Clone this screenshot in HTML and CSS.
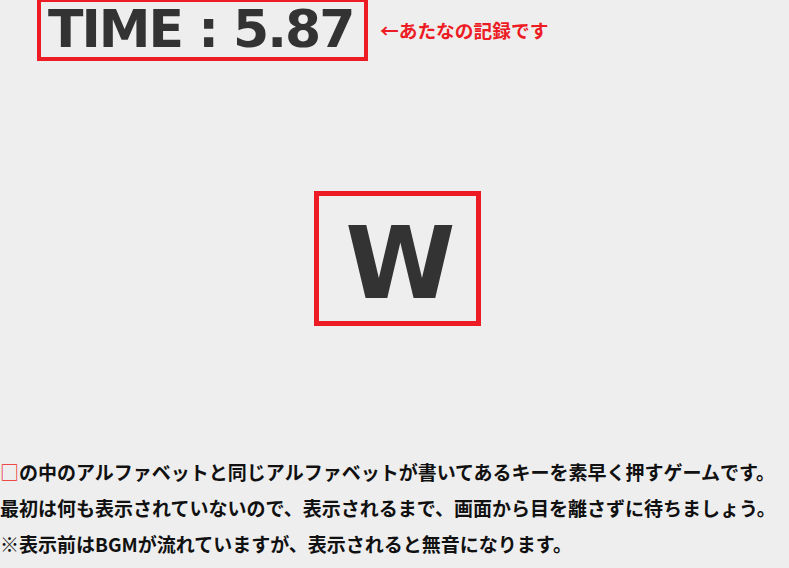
FILE: index.html
```html
<!DOCTYPE html>
<html lang="ja">
<head>
<meta charset="utf-8">
<title>タイピングゲーム</title>
<link rel="stylesheet" href="styles.css">
</head>
<body>
<header class="score-row">
  <h1 class="score-box">TIME : 5.87</h1>
  <p class="score-note">←あたなの記録です</p>
</header>
<main class="stage">
  <div class="letter-box">W</div>
</main>
<section class="rules">
  <p class="rule"><span class="red-square">□</span>の中のアルファベットと同じアルファベットが書いてあるキーを素早く押すゲームです。</p>
  <p class="rule">最初は何も表示されていないので、表示されるまで、画面から目を離さずに待ちましょう。</p>
  <p class="rule">※表示前はBGMが流れていますが、表示されると無音になります。</p>
</section>
</body>
</html>
```
FILE: styles.css
```css
html, body {
  margin: 0;
  padding: 0;
  background: #eeeeee;
}
body {
  width: 789px;
  height: 568px;
  overflow: hidden;
  font-family: "DejaVu Sans", "Noto Sans CJK JP", sans-serif;
  color: #333333;
}
.score-row {
  display: flex;
  align-items: center;
  margin: -2px 0 0 37px;
  gap: 12px;
}
.score-box {
  margin: 0;
  box-sizing: border-box;
  width: 331px;
  height: 63px;
  border: 4px solid #ed1c24;
  padding: 0 0 0 7px;
  font-family: "DejaVu Sans", sans-serif;
  font-weight: bold;
  font-size: 52px;
  letter-spacing: -2px;
  line-height: 55px;
  white-space: nowrap;
  color: #333333;
}
.score-note {
  margin: 0;
  font-family: "Noto Sans CJK JP", sans-serif;
  font-weight: bold;
  font-size: 18.72px;
  color: #ed1c24;
}
.stage {
  display: flex;
  justify-content: center;
  padding-left: 6px;
  margin-top: 130px;
}
.letter-box {
  box-sizing: border-box;
  width: 167px;
  height: 135px;
  border: 5px solid #ed1c24;
  display: flex;
  align-items: center;
  justify-content: center;
  padding: 10px 0 0 6px;
  font-family: "DejaVu Sans", sans-serif;
  font-weight: bold;
  font-size: 100px;
  line-height: 1;
  color: #333333;
}
.rules {
  margin-top: 128px;
}
.rule {
  margin: 0;
  font-family: "Noto Sans CJK JP", sans-serif;
  font-weight: bold;
  font-size: 19px;
  line-height: 36px;
  color: #111111;
  white-space: nowrap;
}
.red-square {
  color: #ed1c24;
  font-weight: normal;
}
```
